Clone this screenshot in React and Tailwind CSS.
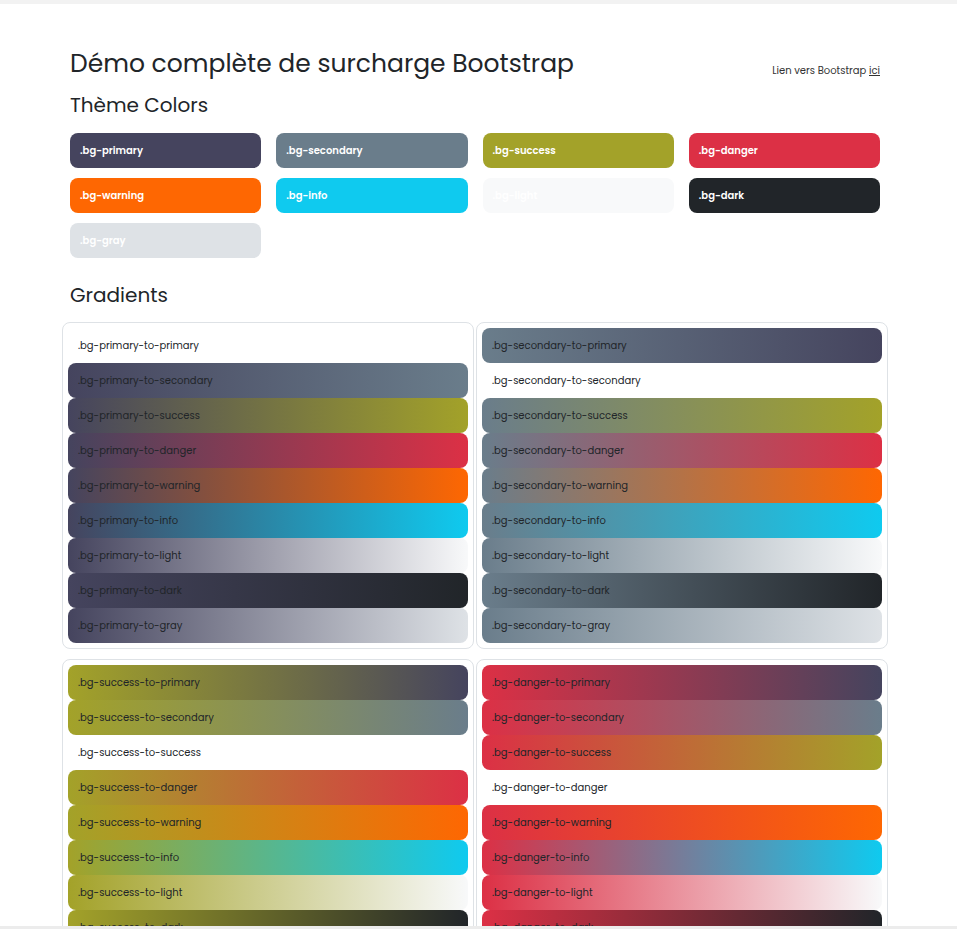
const colors = {
  primary: '#45445e',
  secondary: '#6a7d8b',
  success: '#a3a229',
  danger: '#dc3045',
  warning: '#fe6702',
  info: '#0fcaef',
  light: '#f8f9fa',
  dark: '#212529',
  gray: '#dee2e6',
};

const themeBoxes = [
  { name: 'primary', cls: 'bg-[#45445e]' },
  { name: 'secondary', cls: 'bg-[#6a7d8b]' },
  { name: 'success', cls: 'bg-[#a3a229]' },
  { name: 'danger', cls: 'bg-[#dc3045]' },
  { name: 'warning', cls: 'bg-[#fe6702]' },
  { name: 'info', cls: 'bg-[#0fcaef]' },
  { name: 'light', cls: 'bg-[#f8f9fa]' },
  { name: 'dark', cls: 'bg-[#212529]' },
  { name: 'gray', cls: 'bg-[#dee2e6]' },
];

const order = ['primary', 'secondary', 'success', 'danger', 'warning', 'info', 'light', 'dark', 'gray'];
const groups = ['primary', 'secondary', 'success', 'danger'];

function GradientRow({ from, to }) {
  // same colour on both ends shows as a plain row
  const style = from === to ? {} : { backgroundImage: `linear-gradient(to right, ${colors[from]}, ${colors[to]})` };
  return (
    <div className="h-[35px] rounded-lg flex items-center px-[10px] text-[10px] text-[#212529]" style={style}>
      .bg-{from}-to-{to}
    </div>
  );
}

function GradientCard({ from }) {
  return (
    <div className="border border-[#dee2e6] rounded-lg p-[5px]">
      {order.map((to) => (
        <GradientRow key={to} from={from} to={to} />
      ))}
    </div>
  );
}

export default function App() {
  return (
    <div className="min-h-screen bg-white font-['Poppins','Inter',sans-serif] text-[#212529]">
      <div className="h-[4px] bg-[#f2f2f2]" />
      <div className="w-[826px] ml-[62px] pt-[45px]">
        <div className="px-[8px] flex items-end justify-between">
          <h1 className="text-[25px] leading-[30px] font-normal">Démo complète de surcharge Bootstrap</h1>
          <p className="text-[10px] text-[#333] mb-[1px]">
            Lien vers Bootstrap <a href="#" className="underline">ici</a>
          </p>
        </div>
        <h2 className="px-[8px] mt-[14px] text-[20px] leading-[24px] font-normal">Thème Colors</h2>
        <div className="px-[8px] mt-[16px] grid grid-cols-4 gap-x-[15px] gap-y-[10px]">
          {themeBoxes.map((b) => (
            <div key={b.name} className={`${b.cls} h-[35px] rounded-lg flex items-center px-[10px] text-[10px] font-semibold text-white`}>
              .bg-{b.name}
            </div>
          ))}
        </div>
        <h2 className="px-[8px] mt-[25px] text-[20px] leading-[24px] font-normal">Gradients</h2>
        <div className="mt-[15px] grid grid-cols-2 gap-x-[2px] gap-y-[10px]">
          {groups.map((g) => (
            <GradientCard key={g} from={g} />
          ))}
        </div>
      </div>
      <div className="fixed bottom-0 left-0 right-0 h-[3px] bg-[#ececec]" />
    </div>
  );
}
